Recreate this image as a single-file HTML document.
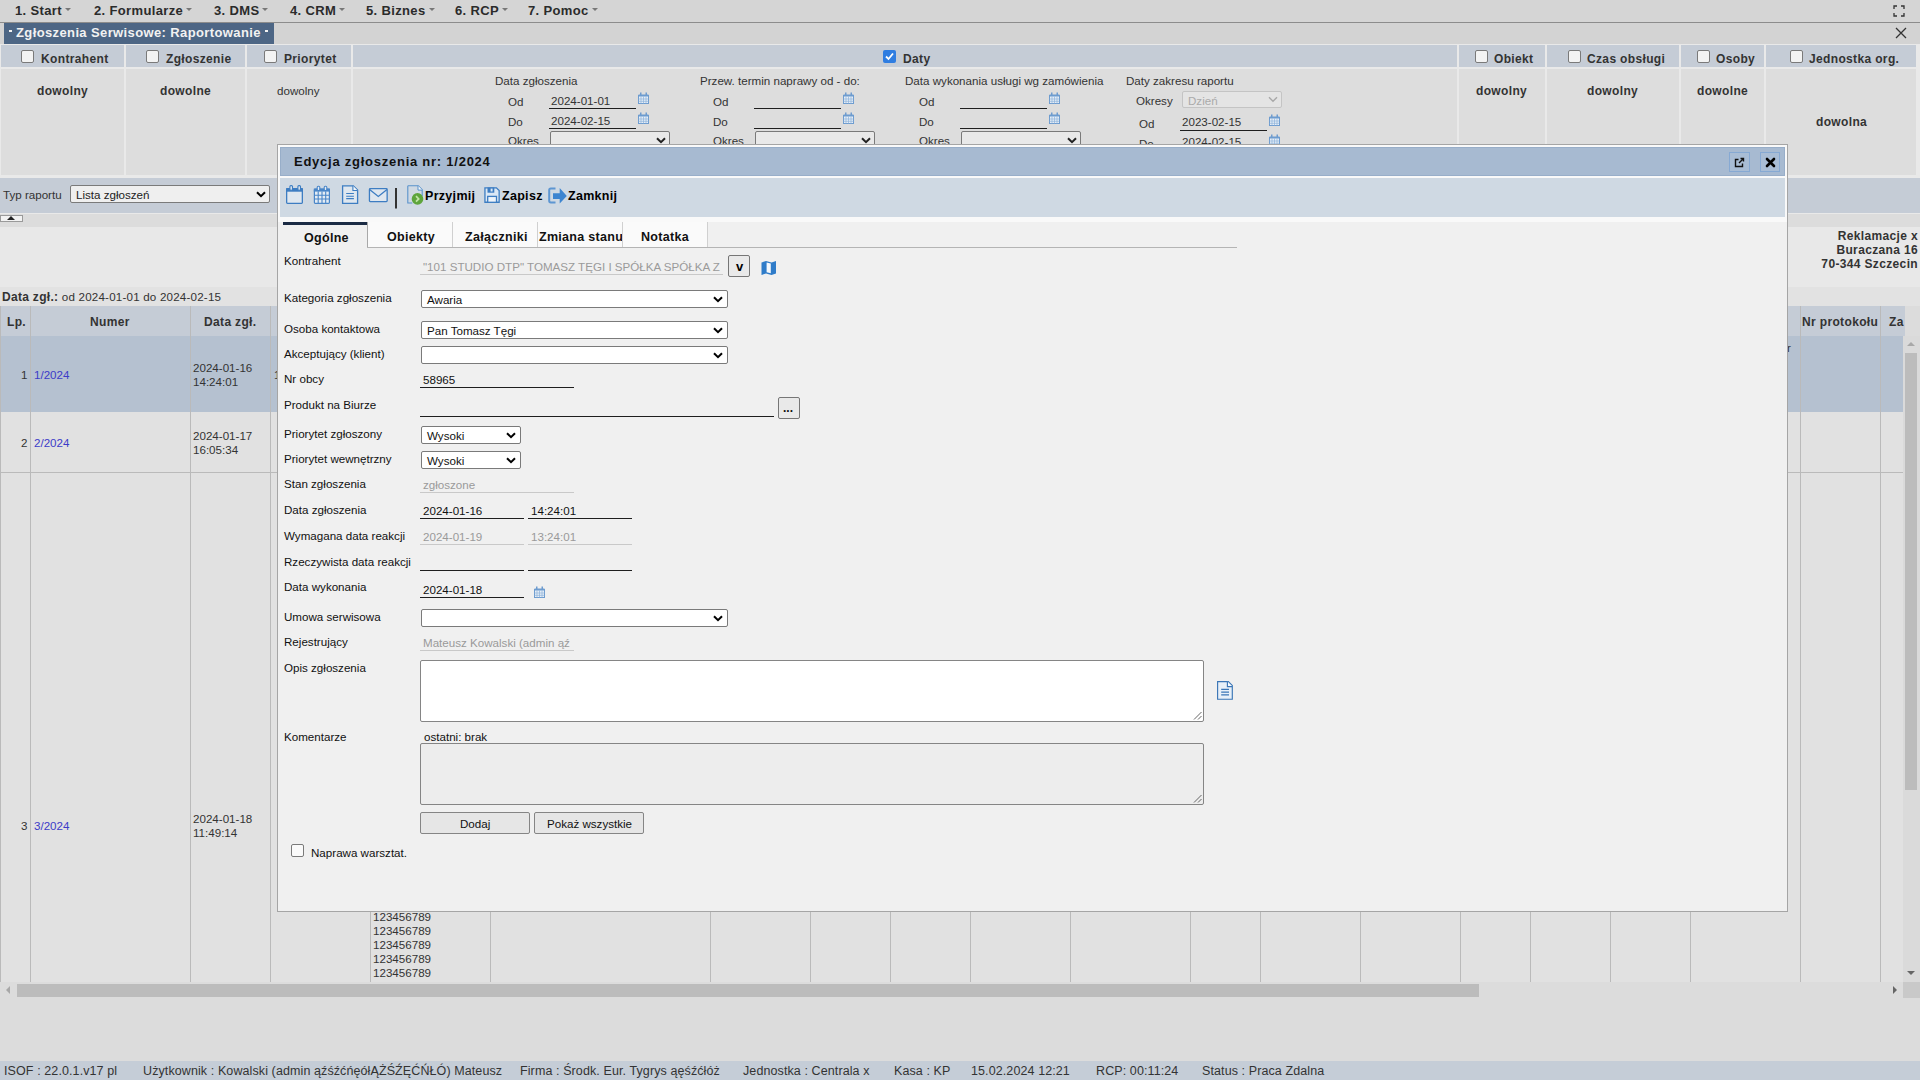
<!DOCTYPE html>
<html><head><meta charset="utf-8">
<style>
*{box-sizing:border-box;margin:0;padding:0}
html,body{width:1920px;height:1080px;overflow:hidden}
body{position:relative;background:#dcdcdc;font-family:"Liberation Sans",sans-serif;font-size:12px;color:#333}
.a{position:absolute}
.t{position:absolute;white-space:nowrap;line-height:1}
.r{font-size:11.6px}
.b{font-weight:bold;font-size:12px;letter-spacing:0.35px}
#menu{left:0;top:0;width:1920px;height:23px;background:#d5d5d5;border-bottom:1px solid #8c8c8c}
.mi{position:absolute;top:4px;font-weight:bold;font-size:13px;line-height:1;letter-spacing:0.35px;color:#2b2b2b;white-space:nowrap}
.caret{display:inline-block;width:0;height:0;border-left:3px solid transparent;border-right:3px solid transparent;border-top:3px solid #777;vertical-align:middle;margin-left:3px;position:relative;top:-2px}
.cb{position:absolute;width:13px;height:13px;border:1px solid #7a7a7a;border-radius:2px;background:#f3f3f3}
.ul{position:absolute;height:1px;background:#1e1e1e}
.ulg{position:absolute;height:1px;background:#c9c9c9}
.sel{position:absolute;border:1px solid #7a7a7a;border-radius:2px;background:#fff}
.chev{position:absolute;width:6px;height:6px;border-right:2px solid #111;border-bottom:2px solid #111;transform:rotate(45deg)}
.cal{position:absolute;width:11px;height:12px}
.vl{position:absolute;width:1px;background:#bababa}
.hl{position:absolute;height:1px;background:#bababa}
</style></head><body>

<!-- MENU -->
<div id="menu" class="a">
 <span class="mi" style="left:15px">1. Start<i class="caret"></i></span>
 <span class="mi" style="left:94px">2. Formularze<i class="caret"></i></span>
 <span class="mi" style="left:214px">3. DMS<i class="caret"></i></span>
 <span class="mi" style="left:290px">4. CRM<i class="caret"></i></span>
 <span class="mi" style="left:366px">5. Biznes<i class="caret"></i></span>
 <span class="mi" style="left:455px">6. RCP<i class="caret"></i></span>
 <span class="mi" style="left:528px">7. Pomoc<i class="caret"></i></span>
 <svg class="a" style="left:1893px;top:5px" width="12" height="12" viewBox="0 0 12 12" fill="none" stroke="#333" stroke-width="1.3"><path d="M1 4V1h3M8 1h3v3M11 8v3H8M4 11H1V8"/></svg>
</div>
<div class="a" style="left:0;top:23px;width:1920px;height:22px;background:#d3d3d3"></div>
<div class="a" style="left:4px;top:23px;width:270px;height:21px;background:#4d6685"></div>
<div class="a" style="left:9px;top:30px;width:3px;height:2px;background:#f2f2f2"></div><div class="t" style="left:16px;top:26px;color:#f2f2f2;font-weight:bold;font-size:13px;letter-spacing:0.38px">Zgłoszenia Serwisowe: Raportowanie</div><div class="a" style="left:265px;top:30px;width:3px;height:2px;background:#f2f2f2"></div>
<svg class="a" style="left:1895px;top:27px" width="12" height="12" viewBox="0 0 12 12" stroke="#333" stroke-width="1.3"><path d="M1 1L11 11M11 1L1 11"/></svg>

<!-- FILTER -->
<div class="a" style="left:0;top:44px;width:1920px;height:135px;background:#e9e9e9"></div>
<div class="a" style="left:1px;top:45px;width:123px;height:22px;background:#c5ccd6"></div>
<div class="a" style="left:126px;top:45px;width:119px;height:22px;background:#c5ccd6"></div>
<div class="a" style="left:247px;top:45px;width:104px;height:22px;background:#c5ccd6"></div>
<div class="a" style="left:353px;top:45px;width:1104px;height:22px;background:#c5ccd6"></div>
<div class="a" style="left:1459px;top:45px;width:86px;height:22px;background:#c5ccd6"></div>
<div class="a" style="left:1547px;top:45px;width:132px;height:22px;background:#c5ccd6"></div>
<div class="a" style="left:1681px;top:45px;width:83px;height:22px;background:#c5ccd6"></div>
<div class="a" style="left:1766px;top:45px;width:150px;height:22px;background:#c5ccd6"></div>

<div class="a" style="left:1px;top:69px;width:123px;height:106px;background:#dddddd"></div>
<div class="a" style="left:126px;top:69px;width:119px;height:106px;background:#dddddd"></div>
<div class="a" style="left:247px;top:69px;width:104px;height:106px;background:#dddddd"></div>
<div class="a" style="left:353px;top:69px;width:1104px;height:106px;background:#dddddd"></div>
<div class="a" style="left:1459px;top:69px;width:86px;height:106px;background:#dddddd"></div>
<div class="a" style="left:1547px;top:69px;width:132px;height:106px;background:#dddddd"></div>
<div class="a" style="left:1681px;top:69px;width:83px;height:106px;background:#dddddd"></div>
<div class="a" style="left:1766px;top:69px;width:150px;height:106px;background:#dddddd"></div>

<div class="cb" style="left:21px;top:50px"></div><div class="t b" style="left:41px;top:53px">Kontrahent</div>
<div class="cb" style="left:146px;top:50px"></div><div class="t b" style="left:166px;top:53px">Zgłoszenie</div>
<div class="cb" style="left:264px;top:50px"></div><div class="t b" style="left:284px;top:53px">Priorytet</div>
<div class="a" style="left:883px;top:50px;width:13px;height:13px;border-radius:2px;background:#2f7de1"></div>
<svg class="a" style="left:883px;top:50px" width="13" height="13" viewBox="0 0 13 13" fill="none" stroke="#fff" stroke-width="1.8"><path d="M3 6.5L5.5 9L10 3.5"/></svg>
<div class="t b" style="left:903px;top:53px">Daty</div>
<div class="cb" style="left:1475px;top:50px"></div><div class="t b" style="left:1494px;top:53px">Obiekt</div>
<div class="cb" style="left:1568px;top:50px"></div><div class="t b" style="left:1587px;top:53px">Czas obsługi</div>
<div class="cb" style="left:1697px;top:50px"></div><div class="t b" style="left:1716px;top:53px">Osoby</div>
<div class="cb" style="left:1790px;top:50px"></div><div class="t b" style="left:1809px;top:53px">Jednostka org.</div>

<div class="t b" style="left:37px;top:85px">dowolny</div>
<div class="t b" style="left:160px;top:85px">dowolne</div>
<div class="t r" style="left:277px;top:85px">dowolny</div>
<div class="t b" style="left:1476px;top:85px">dowolny</div>
<div class="t b" style="left:1587px;top:85px">dowolny</div>
<div class="t b" style="left:1697px;top:85px">dowolne</div>
<div class="t b" style="left:1816px;top:116px">dowolna</div>

<svg width="0" height="0" style="position:absolute">
 <defs>
  <symbol id="cal" viewBox="0 0 11 12">
   <rect x="0.5" y="3.5" width="10" height="8" fill="#e6eef7" stroke="#6e9ccf"/>
   <rect x="0.5" y="2.5" width="10" height="2" fill="#6e9ccf"/>
   <rect x="2" y="0.5" width="1.5" height="3" fill="#6e9ccf"/><rect x="7.5" y="0.5" width="1.5" height="3" fill="#6e9ccf"/>
   <path d="M0.5 7H10.5M0.5 9.3H10.5M3 4.5V11.5M5.5 4.5V11.5M8 4.5V11.5" stroke="#8cb1da" stroke-width="0.7"/>
  </symbol>
 </defs>
</svg>

<!-- dates group 1 -->
<div class="t r" style="left:495px;top:75px">Data zgłoszenia</div>
<div class="t r" style="left:508px;top:96px">Od</div>
<div class="t r" style="left:551px;top:95px">2024-01-01</div>
<div class="ul" style="left:549px;top:108px;width:87px"></div>
<svg class="cal" style="left:638px;top:92px"><use href="#cal"/></svg>
<div class="t r" style="left:508px;top:116px">Do</div>
<div class="t r" style="left:551px;top:115px">2024-02-15</div>
<div class="ul" style="left:549px;top:128px;width:87px"></div>
<svg class="cal" style="left:638px;top:112px"><use href="#cal"/></svg>
<div class="t r" style="left:508px;top:135px">Okres</div>
<div class="sel" style="left:550px;top:131px;width:120px;height:20px;background:#e9e9e9"><svg class="a" style="left:105px;top:5px" width="10" height="7" viewBox="0 0 10 7" fill="none" stroke="#222" stroke-width="2"><path d="M1 1.2L5 5.2L9 1.2"/></svg></div>

<!-- dates group 2 -->
<div class="t r" style="left:700px;top:75px">Przew. termin naprawy od - do:</div>
<div class="t r" style="left:713px;top:96px">Od</div>
<div class="ul" style="left:754px;top:108px;width:87px"></div>
<svg class="cal" style="left:843px;top:92px"><use href="#cal"/></svg>
<div class="t r" style="left:713px;top:116px">Do</div>
<div class="ul" style="left:754px;top:128px;width:87px"></div>
<svg class="cal" style="left:843px;top:112px"><use href="#cal"/></svg>
<div class="t r" style="left:713px;top:135px">Okres</div>
<div class="sel" style="left:755px;top:131px;width:120px;height:20px;background:#e9e9e9"><svg class="a" style="left:105px;top:5px" width="10" height="7" viewBox="0 0 10 7" fill="none" stroke="#222" stroke-width="2"><path d="M1 1.2L5 5.2L9 1.2"/></svg></div>

<!-- dates group 3 -->
<div class="t r" style="left:905px;top:75px">Data wykonania usługi wg zamówienia</div>
<div class="t r" style="left:919px;top:96px">Od</div>
<div class="ul" style="left:960px;top:108px;width:87px"></div>
<svg class="cal" style="left:1049px;top:92px"><use href="#cal"/></svg>
<div class="t r" style="left:919px;top:116px">Do</div>
<div class="ul" style="left:960px;top:128px;width:87px"></div>
<svg class="cal" style="left:1049px;top:112px"><use href="#cal"/></svg>
<div class="t r" style="left:919px;top:135px">Okres</div>
<div class="sel" style="left:961px;top:131px;width:120px;height:20px;background:#e9e9e9"><svg class="a" style="left:105px;top:5px" width="10" height="7" viewBox="0 0 10 7" fill="none" stroke="#222" stroke-width="2"><path d="M1 1.2L5 5.2L9 1.2"/></svg></div>

<!-- dates group 4 -->
<div class="t r" style="left:1126px;top:75px">Daty zakresu raportu</div>
<div class="t r" style="left:1136px;top:95px">Okresy</div>
<div class="sel" style="left:1182px;top:91px;width:100px;height:17px;background:#e4e4e4;border-color:#c4c4c4"><div class="t r" style="left:5px;top:3px;color:#aaa">Dzień</div><svg class="a" style="left:85px;top:4px" width="10" height="7" viewBox="0 0 10 7" fill="none" stroke="#a8a8a8" stroke-width="1.4"><path d="M1 1.2L5 5.2L9 1.2"/></svg></div>
<div class="t r" style="left:1139px;top:118px">Od</div>
<div class="t r" style="left:1182px;top:116px">2023-02-15</div>
<div class="ul" style="left:1180px;top:130px;width:87px"></div>
<svg class="cal" style="left:1269px;top:114px"><use href="#cal"/></svg>
<div class="t r" style="left:1139px;top:138px">Do</div>
<div class="t r" style="left:1182px;top:136px">2024-02-15</div>
<svg class="cal" style="left:1269px;top:134px"><use href="#cal"/></svg>

<!-- TYP RAPORTU -->
<div class="a" style="left:0;top:178px;width:1920px;height:35px;background:#c5ccd6"></div>
<div class="a" style="left:0;top:213px;width:1920px;height:1px;background:#e9e9e9"></div>
<div class="a" style="left:0;top:214px;width:1920px;height:13px;background:#dcdcdc"></div>
<div class="t r" style="left:3px;top:189px">Typ raportu</div>
<div class="sel" style="left:70px;top:185px;width:200px;height:18px;background:#efefef"><div class="t r" style="left:5px;top:3px;color:#222">Lista zgłoszeń</div><svg class="a" style="left:185px;top:5px" width="10" height="7" viewBox="0 0 10 7" fill="none" stroke="#000" stroke-width="2"><path d="M1 1.2L5 5.2L9 1.2"/></svg></div>
<div class="a" style="left:0;top:215px;width:23px;height:7px;background:#f2f2f2;border:1px solid #9a9a9a"></div>
<div class="a" style="left:7px;top:216px;width:0;height:0;border-left:4px solid transparent;border-right:4px solid transparent;border-bottom:4px solid #222"></div>

<!-- REPORT HEADER -->
<div class="a" style="left:0;top:227px;width:1920px;height:60px;background:#e8e8e8"></div>
<div class="t b" style="right:2px;top:229px;text-align:right;line-height:14px;color:#333">Reklamacje x<br>Buraczana 16<br>70-344 Szczecin</div>
<div class="a" style="left:0;top:287px;width:1920px;height:19px;background:#e2e2e2"></div>
<div class="t" style="left:2px;top:291px;font-size:11.6px;letter-spacing:0.2px"><b style="letter-spacing:0.3px;font-size:12px">Data zgł.:</b> od 2024-01-01 do 2024-02-15</div>

<!-- TABLE -->
<div class="a" style="left:0;top:306px;width:1905px;height:30px;background:#c5ccd6"></div>
<div class="a" style="left:0;top:336px;width:1903px;height:76px;background:#b5c1d0"></div>
<div class="a" style="left:0;top:412px;width:1903px;height:570px;background:#e1e1e1"></div>
<div class="hl" style="left:0;top:472px;width:1903px"></div>
<div class="vl" style="left:0;top:306px;height:676px"></div>
<div class="vl" style="left:30px;top:306px;height:676px"></div>
<div class="vl" style="left:190px;top:306px;height:676px"></div>
<div class="vl" style="left:270px;top:306px;height:676px"></div>
<div class="vl" style="left:370px;top:306px;height:676px"></div>
<div class="vl" style="left:490px;top:306px;height:676px"></div>
<div class="vl" style="left:710px;top:306px;height:676px"></div>
<div class="vl" style="left:810px;top:306px;height:676px"></div>
<div class="vl" style="left:890px;top:306px;height:676px"></div>
<div class="vl" style="left:970px;top:306px;height:676px"></div>
<div class="vl" style="left:1070px;top:306px;height:676px"></div>
<div class="vl" style="left:1190px;top:306px;height:676px"></div>
<div class="vl" style="left:1260px;top:306px;height:676px"></div>
<div class="vl" style="left:1360px;top:306px;height:676px"></div>
<div class="vl" style="left:1460px;top:306px;height:676px"></div>
<div class="vl" style="left:1530px;top:306px;height:676px"></div>
<div class="vl" style="left:1610px;top:306px;height:676px"></div>
<div class="vl" style="left:1690px;top:306px;height:676px"></div>
<div class="vl" style="left:1800px;top:306px;height:676px"></div>
<div class="vl" style="left:1880px;top:306px;height:676px"></div>

<div class="t b" style="left:7px;top:316px">Lp.</div>
<div class="t b" style="left:90px;top:316px">Numer</div>
<div class="t b" style="left:204px;top:316px">Data zgł.</div>
<div class="t b" style="left:1802px;top:316px">Nr protokołu</div>
<div class="t b" style="left:1889px;top:316px">Za</div>

<div class="t r" style="left:21px;top:369px">1</div>
<div class="t r" style="left:34px;top:369px;color:#3c3cc8">1/2024</div>
<div class="t r" style="left:193px;top:361px;line-height:14px">2024-01-16<br>14:24:01</div>
<div class="t r" style="left:274px;top:369px">1</div>
<div class="t r" style="left:1787px;top:342px">r</div>

<div class="t r" style="left:21px;top:437px">2</div>
<div class="t r" style="left:34px;top:437px;color:#3c3cc8">2/2024</div>
<div class="t r" style="left:193px;top:429px;line-height:14px">2024-01-17<br>16:05:34</div>

<div class="t r" style="left:21px;top:820px">3</div>
<div class="t r" style="left:34px;top:820px;color:#3c3cc8">3/2024</div>
<div class="t r" style="left:193px;top:812px;line-height:14px">2024-01-18<br>11:49:14</div>
<div class="t r" style="left:373px;top:910px;line-height:14px">123456789<br>123456789<br>123456789<br>123456789<br>123456789</div>

<!-- v scrollbar -->
<div class="a" style="left:1903px;top:336px;width:17px;height:646px;background:#dadada"></div>
<div class="a" style="left:1905px;top:353px;width:12px;height:437px;background:#bcbcbc"></div>
<div class="a" style="left:1907px;top:342px;width:0;height:0;border-left:4px solid transparent;border-right:4px solid transparent;border-bottom:4px solid #a8a8a8"></div>
<div class="a" style="left:1907px;top:971px;width:0;height:0;border-left:4px solid transparent;border-right:4px solid transparent;border-top:4px solid #666"></div>
<!-- h scrollbar -->
<div class="a" style="left:0;top:982px;width:1920px;height:16px;background:#dcdcdc"></div>
<div class="a" style="left:17px;top:984px;width:1462px;height:13px;background:#bcbcbc"></div>
<div class="a" style="left:6px;top:986px;width:0;height:0;border-top:4px solid transparent;border-bottom:4px solid transparent;border-right:4px solid #a8a8a8"></div>
<div class="a" style="left:1893px;top:986px;width:0;height:0;border-top:4px solid transparent;border-bottom:4px solid transparent;border-left:4px solid #666"></div>
<div class="a" style="left:1903px;top:982px;width:17px;height:16px;background:#c9c9c9"></div>
<div class="a" style="left:0;top:998px;width:1920px;height:63px;background:#dcdcdc"></div>

<!-- STATUS -->
<div class="a" style="left:0;top:1061px;width:1920px;height:19px;background:#c5cdd7"></div>
<div class="t" style="left:4px;top:1065px;font-size:12.5px;letter-spacing:0.1px">ISOF : 22.0.1.v17 pl</div>
<div class="t" style="left:143px;top:1065px;font-size:12.5px;letter-spacing:0.1px">Użytkownik : Kowalski (admin ąźśźćńęółĄŻŚŹĘĆŃŁÓ) Mateusz</div>
<div class="t" style="left:520px;top:1065px;font-size:12.5px;letter-spacing:0.1px">Firma : Środk. Eur. Tygrys ąęśźćłóż</div>
<div class="t" style="left:743px;top:1065px;font-size:12.5px;letter-spacing:0.1px">Jednostka : Centrala x</div>
<div class="t" style="left:894px;top:1065px;font-size:12.5px;letter-spacing:0.1px">Kasa : KP</div>
<div class="t" style="left:971px;top:1065px;font-size:12.5px;letter-spacing:0.1px">15.02.2024 12:21</div>
<div class="t" style="left:1096px;top:1065px;font-size:12.5px;letter-spacing:0.1px">RCP: 00:11:24</div>
<div class="t" style="left:1202px;top:1065px;font-size:12.5px;letter-spacing:0.1px">Status : Praca Zdalna</div>

<!-- MODAL -->
<div class="a" style="left:277px;top:144px;width:1511px;height:768px;background:#f0f0f0;border:1px solid #a5a5a5"></div>
<div class="a" style="left:278px;top:145px;width:1509px;height:77px;background:#f9f9f9"></div>
<div class="a" style="left:280px;top:147px;width:1505px;height:29px;background:#a7bad1;border:1px solid #98aec9"></div>
<div class="t" style="left:294px;top:155px;font-weight:bold;font-size:13px;letter-spacing:0.75px;color:#111">Edycja zgłoszenia nr: 1/2024</div>
<div class="a" style="left:1729px;top:152px;width:21px;height:20px;border:1px solid #86a9d3;background:#a9bdd5"></div>
<svg class="a" style="left:1734px;top:157px" width="11" height="11" viewBox="0 0 11 11" fill="none" stroke="#111" stroke-width="1.4"><path d="M4.5 2.5H1.5V9.5H8.5V6.5M5 6L9.5 1.5M6.5 1.5H9.5V4.5"/></svg>
<div class="a" style="left:1760px;top:152px;width:20px;height:20px;border:1px solid #86a9d3;background:#a9bdd5"></div>
<svg class="a" style="left:1765px;top:157px" width="11" height="11" viewBox="0 0 11 11" fill="none" stroke="#000" stroke-width="2.6" stroke-linecap="round"><path d="M2 2L9 9M9 2L2 9"/></svg>

<div class="a" style="left:280px;top:178px;width:1505px;height:39px;background:#cfd9e3"></div>
<!-- toolbar icons -->
<svg class="a" style="left:280px;top:178px" width="320" height="39" viewBox="280 178 320 39" fill="none">
 <g stroke="#3d7dc2" stroke-width="1.3">
  <rect x="286.65" y="188.65" width="15.7" height="14.7" rx="0.8" fill="#dfe7ef"/>
  <rect x="286" y="188.3" width="17" height="3.4" fill="#3d7dc2" stroke="none"/>
  <rect x="289.9" y="185.6" width="2.6" height="4.6" rx="1" fill="#dfe7ef" stroke-width="1.1"/>
  <rect x="297.9" y="185.6" width="2.6" height="4.6" rx="1" fill="#dfe7ef" stroke-width="1.1"/>
 </g>
 <g stroke="#4a86c8" stroke-width="1.2">
  <rect x="314.4" y="189.1" width="15" height="14.2" rx="0.8" fill="#e4ecf4"/>
  <rect x="313.8" y="188.6" width="16.2" height="3" fill="#4a86c8" stroke="none"/>
  <path d="M314.4 195.3H329.4M314.4 199H329.4M318.2 191.5V203.3M322 191.5V203.3M325.7 191.5V203.3" stroke-width="1.1"/>
  <rect x="317.2" y="186.2" width="2.6" height="4.4" rx="1" fill="#e4ecf4" stroke-width="1.1"/>
  <rect x="324.2" y="186.2" width="2.6" height="4.4" rx="1" fill="#e4ecf4" stroke-width="1.1"/>
 </g>
 <g stroke="#3d7dc2" stroke-width="1.3">
  <path d="M342.6 185.8H353.3L357.6 190.1V203.3H342.6Z" fill="#dfe7ef"/>
  <path d="M352.9 185.8V190.5H357.6" fill="#f3f7fb" stroke-width="1.1"/>
  <path d="M346.2 193.5H353.9M346.2 196.2H353.9M346.2 198.6H353.9" stroke-width="1.1"/>
 </g>
 <g stroke="#3d7dc2" stroke-width="1.3">
  <rect x="369.45" y="188.65" width="17.7" height="13" rx="0.8" fill="#dfe7ef"/>
  <path d="M369.6 189.4L378.3 196.5L387 189.4"/>
 </g>
 <rect x="395" y="188" width="2" height="20.5" fill="#333"/>
 <path d="M407.8 185.8H418.3L422.2 189.7V196M412.3 203H407.8V185.8" stroke="#5a92cc" stroke-width="1.1" fill="none"/>
 <path d="M418 185.8V190.1H422.2" stroke="#5a92cc" stroke-width="1" fill="#f4f8fb"/>
 <circle cx="417.5" cy="198.9" r="5.8" fill="#5ea53c"/>
 <path d="M416 196.2L418.7 198.9L416 201.6" stroke="#c3e6a8" stroke-width="1.7"/>
 <g stroke="#3d7dc2" stroke-width="1.3">
  <path d="M484.95 187.85H496.4L499.15 190.6V202.25H484.95Z" fill="#dbe8f5"/>
  <rect x="487.7" y="196.4" width="8.8" height="5.9" fill="#eef4fa"/>
 </g>
 <rect x="487.5" y="187.5" width="6.8" height="5.2" fill="#3d7dc2"/>
 <rect x="490.6" y="188.6" width="2" height="2.9" fill="#dbe8f5"/>
 <path d="M555.5 188.5H550.8Q549.2 188.5 549.2 190.1V200.8Q549.2 202.4 550.8 202.4H555.5" stroke="#5d96d2" stroke-width="2" fill="none"/>
 <path d="M553 193.2H559.7V188L566.8 195.9L559.7 203.4V198.9H553Z" fill="#3d85d0"/>
</svg>
<div class="t" style="left:425px;top:190px;font-weight:bold;font-size:12.5px;letter-spacing:0.3px;color:#000">Przyjmij</div>

<div class="t" style="left:502px;top:190px;font-weight:bold;font-size:12.5px;letter-spacing:0.3px;color:#000">Zapisz</div>

<div class="t" style="left:568px;top:190px;font-weight:bold;font-size:12.5px;letter-spacing:0.3px;color:#000">Zamknij</div>

<!-- tabs -->
<div class="a" style="left:367px;top:247px;width:870px;height:1px;background:#b4b4b4"></div>
<div class="a" style="left:283px;top:222px;width:85px;height:3px;background:#1b2b44"></div>
<div class="t" style="left:304px;top:232px;font-weight:bold;font-size:12.5px;letter-spacing:0.3px;color:#111">Ogólne</div>
<div class="a" style="left:367px;top:222px;width:85px;height:25px;background:#fafafa;border-left:1px solid #a8a8a8"></div>
<div class="t" style="left:387px;top:231px;font-weight:bold;font-size:12.5px;letter-spacing:0.3px;color:#111">Obiekty</div>
<div class="a" style="left:452px;top:222px;width:85px;height:25px;background:#fafafa;border-left:1px solid #d0d0d0"></div>
<div class="t" style="left:465px;top:231px;font-weight:bold;font-size:12.5px;letter-spacing:0.3px;color:#111">Załączniki</div>
<div class="a" style="left:537px;top:222px;width:85px;height:25px;background:#fafafa;border-left:1px solid #d0d0d0"></div>
<div class="t" style="left:539px;top:231px;font-weight:bold;font-size:12.5px;letter-spacing:0.3px;color:#111">Zmiana stanu</div>
<div class="a" style="left:622px;top:222px;width:86px;height:25px;background:#fafafa;border-left:1px solid #d0d0d0;border-right:1px solid #d0d0d0"></div>
<div class="t" style="left:641px;top:231px;font-weight:bold;font-size:12.5px;letter-spacing:0.3px;color:#111">Notatka</div>

<!-- FORM -->
<div style="color:#111">
<div class="t r" style="left:284px;top:255px">Kontrahent</div>
<div class="t r" style="left:284px;top:292px">Kategoria zgłoszenia</div>
<div class="t r" style="left:284px;top:323px">Osoba kontaktowa</div>
<div class="t r" style="left:284px;top:348px">Akceptujący (klient)</div>
<div class="t r" style="left:284px;top:373px">Nr obcy</div>
<div class="t r" style="left:284px;top:399px">Produkt na Biurze</div>
<div class="t r" style="left:284px;top:428px">Priorytet zgłoszony</div>
<div class="t r" style="left:284px;top:453px">Priorytet wewnętrzny</div>
<div class="t r" style="left:284px;top:478px">Stan zgłoszenia</div>
<div class="t r" style="left:284px;top:504px">Data zgłoszenia</div>
<div class="t r" style="left:284px;top:530px">Wymagana data reakcji</div>
<div class="t r" style="left:284px;top:556px">Rzeczywista data reakcji</div>
<div class="t r" style="left:284px;top:581px">Data wykonania</div>
<div class="t r" style="left:284px;top:611px">Umowa serwisowa</div>
<div class="t r" style="left:284px;top:636px">Rejestrujący</div>
<div class="t r" style="left:284px;top:662px">Opis zgłoszenia</div>
<div class="t r" style="left:284px;top:731px">Komentarze</div>

<!-- kontrahent -->
<div class="t r" style="left:423px;top:261px;color:#9a9a9a;width:299px;overflow:hidden">"101 STUDIO DTP" TOMASZ TĘGI I SPÓŁKA SPÓŁKA Z OGRANICZONĄ</div>
<div class="ulg" style="left:420px;top:274px;width:303px"></div>
<div class="a" style="left:728px;top:255px;width:22px;height:22px;border:1px solid #767676;border-radius:2px;background:#e9e9e9"></div>
<div class="t" style="left:736px;top:260px;font-weight:bold;font-size:13px;color:#000">v</div>
<svg class="a" style="left:761px;top:260px" width="16" height="16" viewBox="0 0 16 16"><path d="M0.5 2.5L5 1L10.5 2.5L15 1V13.5L10.5 15L5 13.5L0.5 15Z" fill="#2f7cc9"/><path d="M5.6 2.6L9.8 3.6V13.3L5.6 12.3Z" fill="#f4f8fc"/></svg>

<!-- selects -->
<div class="sel" style="left:421px;top:290px;width:307px;height:18px"><div class="t r" style="left:5px;top:3px">Awaria</div><svg class="a" style="left:291px;top:5px" width="10" height="7" viewBox="0 0 10 7" fill="none" stroke="#000" stroke-width="2"><path d="M1 1.2L5 5.2L9 1.2"/></svg></div>
<div class="sel" style="left:421px;top:321px;width:307px;height:18px"><div class="t r" style="left:5px;top:3px">Pan Tomasz Tęgi</div><svg class="a" style="left:291px;top:5px" width="10" height="7" viewBox="0 0 10 7" fill="none" stroke="#000" stroke-width="2"><path d="M1 1.2L5 5.2L9 1.2"/></svg></div>
<div class="sel" style="left:421px;top:346px;width:307px;height:18px"><svg class="a" style="left:291px;top:5px" width="10" height="7" viewBox="0 0 10 7" fill="none" stroke="#000" stroke-width="2"><path d="M1 1.2L5 5.2L9 1.2"/></svg></div>
<div class="t r" style="left:423px;top:374px">58965</div>
<div class="ul" style="left:420px;top:387px;width:154px"></div>
<div class="ul" style="left:420px;top:416px;width:354px"></div>
<div class="a" style="left:778px;top:397px;width:22px;height:22px;border:1px solid #767676;border-radius:2px;background:#e9e9e9"></div>
<div class="t" style="left:783px;top:402px;font-weight:bold;font-size:12px;color:#111">...</div>
<div class="sel" style="left:421px;top:426px;width:100px;height:18px"><div class="t r" style="left:5px;top:3px">Wysoki</div><svg class="a" style="left:84px;top:5px" width="10" height="7" viewBox="0 0 10 7" fill="none" stroke="#000" stroke-width="2"><path d="M1 1.2L5 5.2L9 1.2"/></svg></div>
<div class="sel" style="left:421px;top:451px;width:100px;height:18px"><div class="t r" style="left:5px;top:3px">Wysoki</div><svg class="a" style="left:84px;top:5px" width="10" height="7" viewBox="0 0 10 7" fill="none" stroke="#000" stroke-width="2"><path d="M1 1.2L5 5.2L9 1.2"/></svg></div>
<div class="t r" style="left:423px;top:479px;color:#9a9a9a">zgłoszone</div>
<div class="ulg" style="left:420px;top:492px;width:154px"></div>
<div class="t r" style="left:423px;top:505px">2024-01-16</div>
<div class="ul" style="left:420px;top:518px;width:104px"></div>
<div class="t r" style="left:531px;top:505px">14:24:01</div>
<div class="ul" style="left:528px;top:518px;width:104px"></div>
<div class="t r" style="left:423px;top:531px;color:#9a9a9a">2024-01-19</div>
<div class="ulg" style="left:420px;top:544px;width:104px"></div>
<div class="t r" style="left:531px;top:531px;color:#9a9a9a">13:24:01</div>
<div class="ulg" style="left:528px;top:544px;width:104px"></div>
<div class="ul" style="left:420px;top:570px;width:104px"></div>
<div class="ul" style="left:528px;top:570px;width:104px"></div>
<div class="t r" style="left:423px;top:584px">2024-01-18</div>
<div class="ul" style="left:420px;top:597px;width:104px"></div>
<svg class="cal" style="left:534px;top:586px"><use href="#cal"/></svg>
<div class="sel" style="left:421px;top:609px;width:307px;height:18px"><svg class="a" style="left:291px;top:5px" width="10" height="7" viewBox="0 0 10 7" fill="none" stroke="#000" stroke-width="2"><path d="M1 1.2L5 5.2L9 1.2"/></svg></div>
<div class="t r" style="left:423px;top:637px;color:#9a9a9a;width:150px;overflow:hidden">Mateusz Kowalski (admin ąź</div>
<div class="ulg" style="left:420px;top:650px;width:154px"></div>

<div class="a" style="left:420px;top:660px;width:784px;height:62px;background:#fff;border:1px solid #858585;border-radius:2px"></div>
<svg class="a" style="left:1193px;top:711px" width="9" height="9" viewBox="0 0 9 9" stroke="#555" stroke-width="0.9"><path d="M8.5 1L1 8.5M8.5 5L5 8.5"/></svg>
<svg class="a" style="left:1205px;top:672px" width="40" height="36" viewBox="1205 672 40 36" fill="none" stroke="#3b76b6" stroke-width="1.15"><path d="M1217.6 681.6H1228.3L1232.3 685.6V699.2H1217.6Z" fill="#e8f0f8"/><path d="M1227.4 681.6V686.6H1232.3" fill="#f6f9fc"/><path d="M1221.2 689.4H1229M1221.2 692.2H1229M1221.2 694.8H1229" stroke-width="1.2"/></svg>
<div class="t r" style="left:424px;top:731px">ostatni: brak</div>
<div class="a" style="left:420px;top:743px;width:784px;height:62px;background:#ededed;border:1px solid #858585;border-radius:2px"></div>
<svg class="a" style="left:1193px;top:794px" width="9" height="9" viewBox="0 0 9 9" stroke="#555" stroke-width="0.9"><path d="M8.5 1L1 8.5M8.5 5L5 8.5"/></svg>
<div class="a" style="left:420px;top:812px;width:110px;height:22px;background:#e6e6e6;border:1px solid #858585;border-radius:2px"></div>
<div class="t r" style="left:460px;top:818px">Dodaj</div>
<div class="a" style="left:534px;top:812px;width:110px;height:22px;background:#e6e6e6;border:1px solid #858585;border-radius:2px"></div>
<div class="t r" style="left:547px;top:818px">Pokaż wszystkie</div>
<div class="cb" style="left:291px;top:844px;background:#fafafa"></div>
<div class="t r" style="left:311px;top:847px">Naprawa warsztat.</div>
</div>
</body></html>
